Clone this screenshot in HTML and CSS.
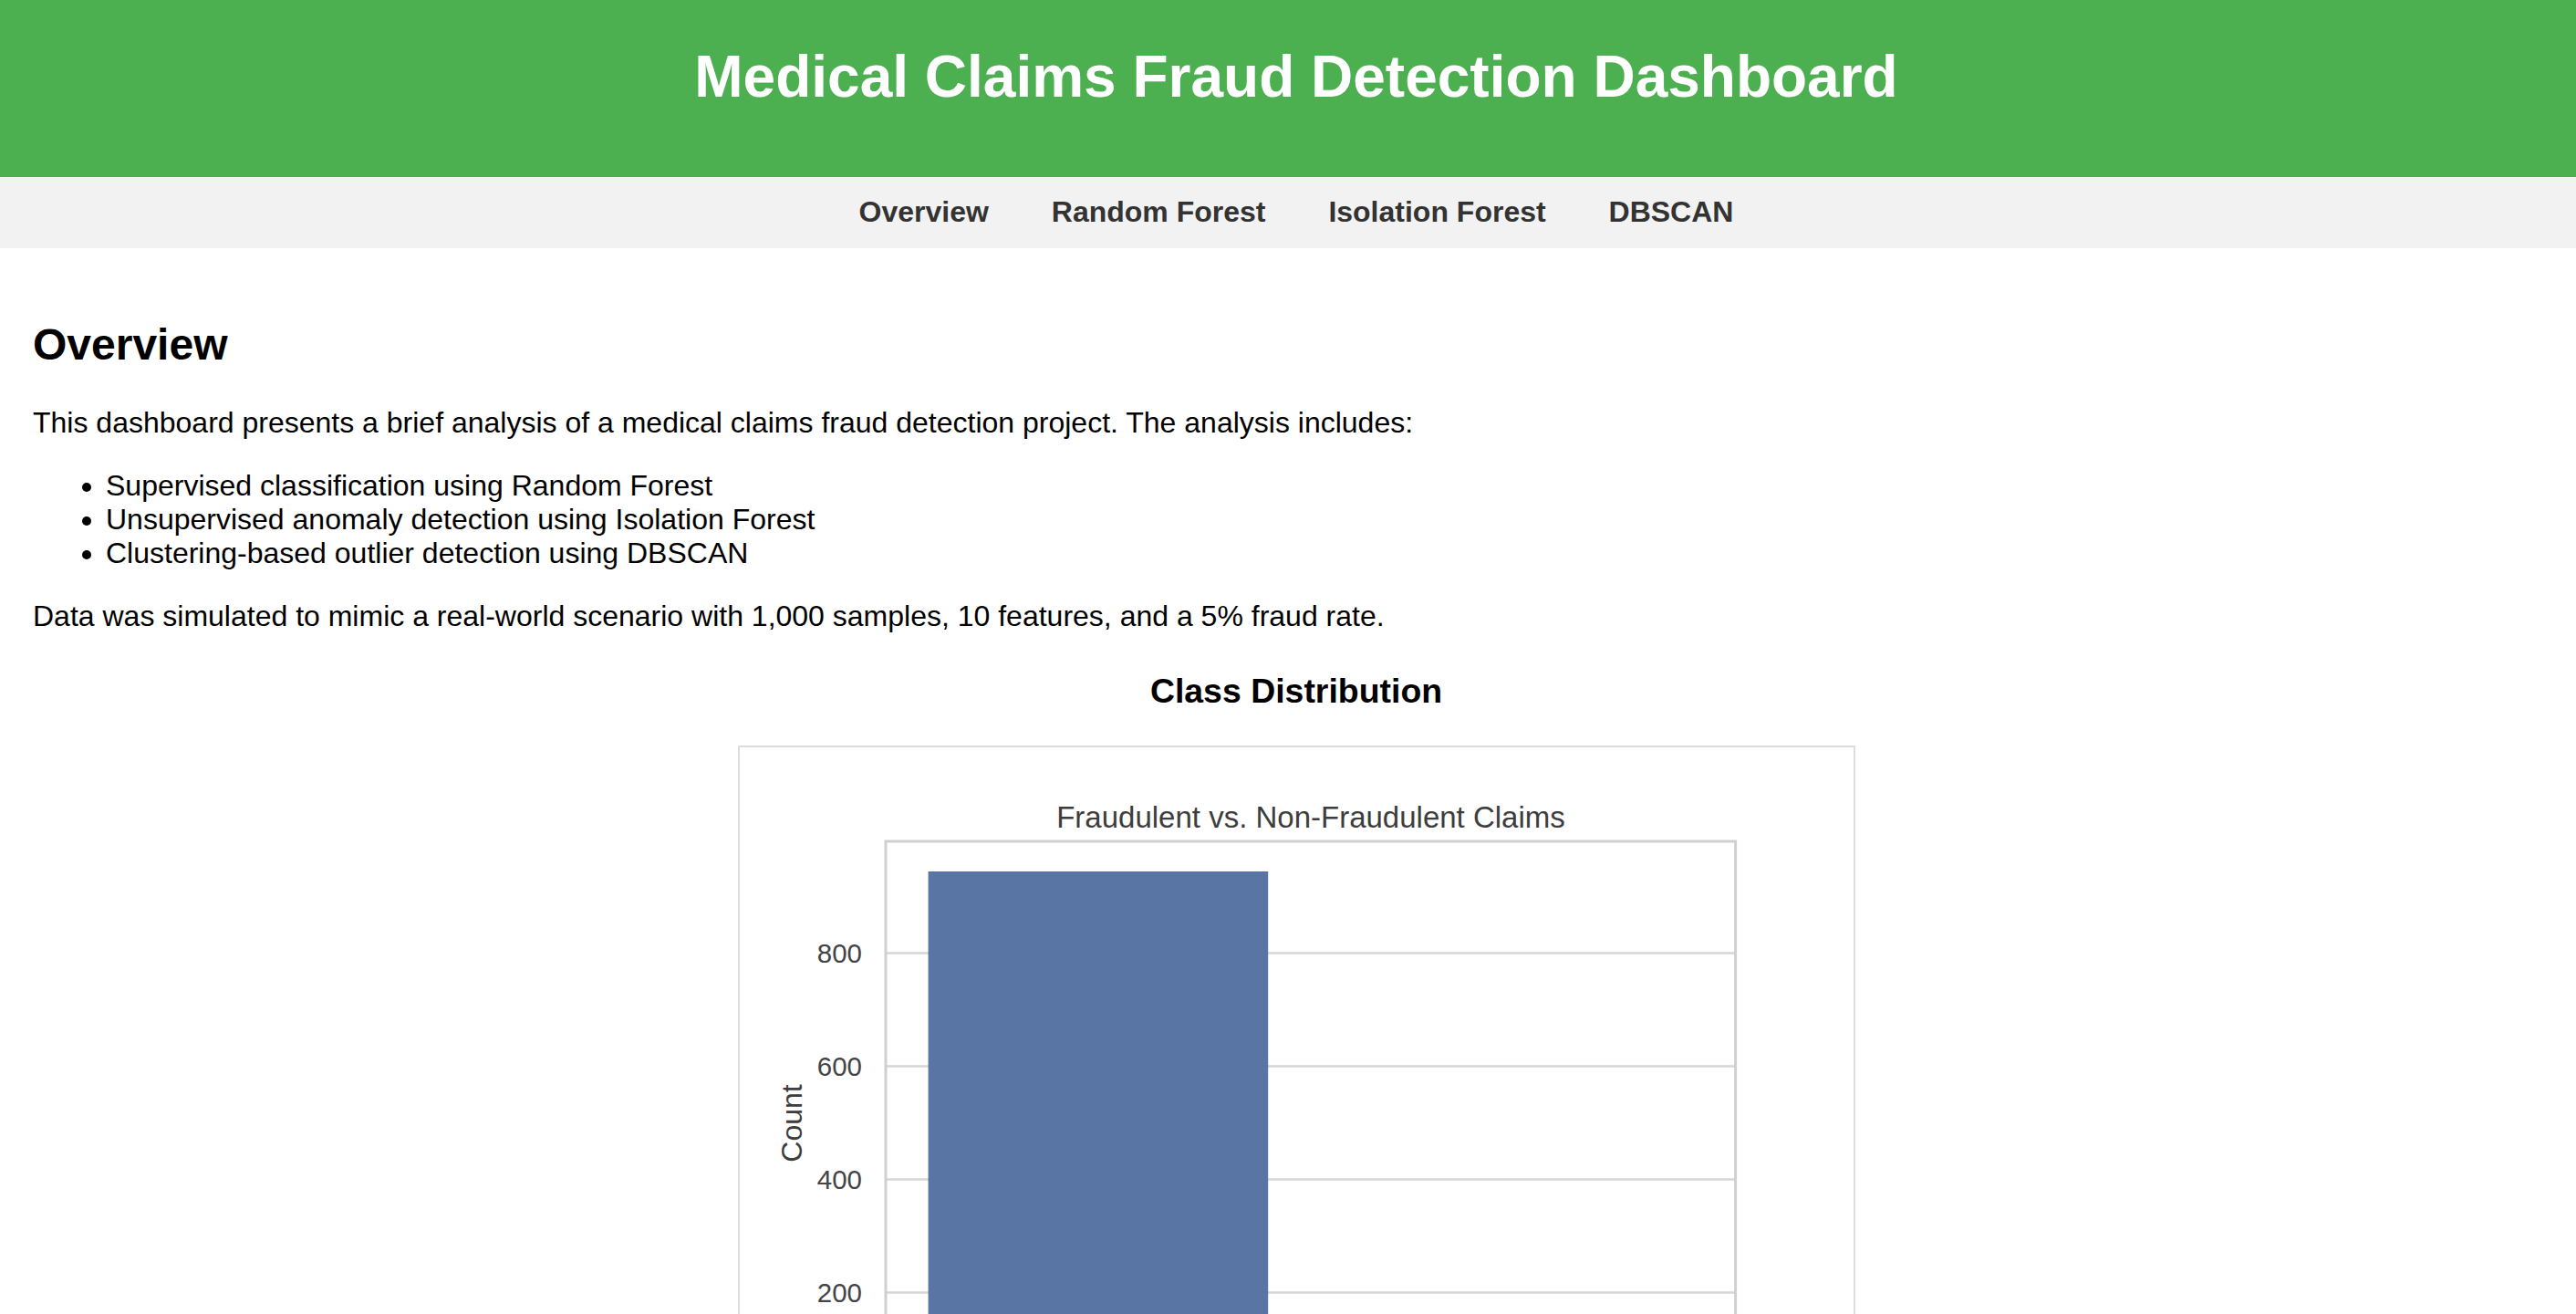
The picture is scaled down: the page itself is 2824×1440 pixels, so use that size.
FILE: index.html
```html
<!DOCTYPE html>
<html lang="en">
<head>
<meta charset="utf-8">
<title>Medical Claims Fraud Detection Dashboard</title>
<link rel="stylesheet" href="styles.css">
</head>
<body>
<header class="site-header">
  <h1 class="site-title">Medical Claims Fraud Detection Dashboard</h1>
</header>
<nav class="site-nav">
  <a class="nav-link" href="#overview">Overview</a>
  <a class="nav-link" href="#random-forest">Random Forest</a>
  <a class="nav-link" href="#isolation-forest">Isolation Forest</a>
  <a class="nav-link" href="#dbscan">DBSCAN</a>
</nav>
<main class="content">
  <section id="overview" class="section">
    <h2 class="section-title">Overview</h2>
    <p class="text">This dashboard presents a brief analysis of a medical claims fraud detection project. The analysis includes:</p>
    <ul class="list">
      <li>Supervised classification using Random Forest</li>
      <li>Unsupervised anomaly detection using Isolation Forest</li>
      <li>Clustering-based outlier detection using DBSCAN</li>
    </ul>
    <p class="text">Data was simulated to mimic a real-world scenario with 1,000 samples, 10 features, and a 5% fraud rate.</p>
    <h3 class="chart-heading">Class Distribution</h3>
    <div class="chart-frame">
      <svg class="chart" width="1221" height="800" viewBox="0 0 1221 800" xmlns="http://www.w3.org/2000/svg">
        <rect x="0" y="0" width="1221" height="800" fill="#ffffff"/>
        <text class="chart-title" x="626" y="88" text-anchor="middle">Fraudulent vs. Non-Fraudulent Claims</text>
        <g class="grid">
          <line x1="160" y1="225.5" x2="1091.6" y2="225.5"/>
          <line x1="160" y1="349.5" x2="1091.6" y2="349.5"/>
          <line x1="160" y1="473.6" x2="1091.6" y2="473.6"/>
          <line x1="160" y1="597.6" x2="1091.6" y2="597.6"/>
        </g>
        <rect class="bar" x="206.6" y="136" width="372.6" height="585.7"/>
        <rect class="bar" x="672.4" y="687.6" width="372.6" height="34.1"/>
        <rect class="spine" x="160" y="103" width="931.6" height="618.7"/>
        <g class="tick">
          <text x="134" y="236" text-anchor="end">800</text>
          <text x="134" y="360" text-anchor="end">600</text>
          <text x="134" y="484" text-anchor="end">400</text>
          <text x="134" y="608" text-anchor="end">200</text>
        </g>
        <text class="axis-label" transform="translate(68 412) rotate(-90)" text-anchor="middle">Count</text>
      </svg>
    </div>
  </section>
</main>
</body>
</html>
```

FILE: styles.css
```css
html {
  overflow: hidden;
}

body {
  margin: 0;
  font-family: "Liberation Sans", Arial, sans-serif;
  font-size: 32px;
  color: #000;
  background: #fff;
}

.site-header {
  background: #4caf50;
  color: #fff;
  text-align: center;
  padding: 47px 0 73px 18px;
}

.site-title {
  margin: 0;
  font-size: 64px;
  font-weight: bold;
  line-height: normal;
}

.site-nav {
  background: #f2f2f2;
  text-align: center;
  padding: 19.6px 0 21.6px 18px;
}

.nav-link {
  color: #333;
  text-decoration: none;
  font-weight: bold;
  margin: 0 30px;
}

.content {
  padding: 38px 18px 0 36px;
}

.section-title {
  font-size: 48px;
  margin: 39.84px 0;
}

.text {
  margin: 32px 0;
}

.list {
  margin: 32px 0;
  padding-left: 80px;
}

.chart-heading {
  text-align: center;
  font-size: 37.44px;
  margin: 42.5px 0 38px;
}

.chart-frame {
  width: 1221px;
  margin: 0 auto;
  border: 2px solid #dddddd;
  background: #fff;
}

.chart {
  display: block;
  font-family: "Liberation Sans", Arial, sans-serif;
}

.chart-title {
  font-size: 33px;
  fill: #3d3d3d;
}

.grid line {
  stroke: #d6d6d6;
  stroke-width: 2.5;
}

.bar {
  fill: #5975a4;
}

.spine {
  fill: none;
  stroke: #d0d0d0;
  stroke-width: 3;
}

.tick text {
  font-size: 29.5px;
  fill: #444444;
}

.axis-label {
  font-size: 32px;
  fill: #3d3d3d;
}
```
